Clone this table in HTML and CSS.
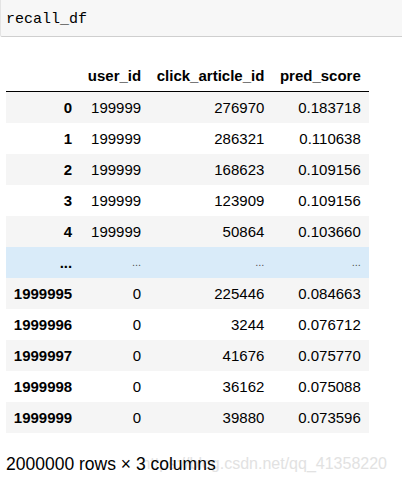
FILE: index.html
```html
<!DOCTYPE html>
<html>
<head>
<meta charset="utf-8">
<link rel="stylesheet" href="styles.css">
</head>
<body>
<div class="input-cell"><span class="code">recall_df</span></div>
<div class="output">
  <table class="df">
    <thead>
      <tr><th></th><th>user_id</th><th>click_article_id</th><th>pred_score</th></tr>
    </thead>
    <tbody>
      <tr><th>0</th><td>199999</td><td>276970</td><td>0.183718</td></tr>
      <tr><th>1</th><td>199999</td><td>286321</td><td>0.110638</td></tr>
      <tr><th>2</th><td>199999</td><td>168623</td><td>0.109156</td></tr>
      <tr><th>3</th><td>199999</td><td>123909</td><td>0.109156</td></tr>
      <tr><th>4</th><td>199999</td><td>50864</td><td>0.103660</td></tr>
      <tr class="hover"><th>...</th><td class="dots">...</td><td class="dots">...</td><td class="dots">...</td></tr>
      <tr><th>1999995</th><td>0</td><td>225446</td><td>0.084663</td></tr>
      <tr><th>1999996</th><td>0</td><td>3244</td><td>0.076712</td></tr>
      <tr><th>1999997</th><td>0</td><td>41676</td><td>0.075770</td></tr>
      <tr><th>1999998</th><td>0</td><td>36162</td><td>0.075088</td></tr>
      <tr><th>1999999</th><td>0</td><td>39880</td><td>0.073596</td></tr>
    </tbody>
  </table>
  <div class="footer">
    <span class="watermark">https://blog.csdn.net/qq_41358220</span>
    <span class="shape">2000000 rows × 3 columns</span>
  </div>
</div>
</body>
</html>
```
FILE: styles.css
```css
html, body {
  margin: 0;
  padding: 0;
  background: #fff;
}
body {
  width: 402px;
  height: 481px;
  overflow: hidden;
  font-family: "Liberation Sans", Arial, sans-serif;
  color: #000;
}
.input-cell {
  height: 36px;
  background: #f7f7f7;
  border-bottom: 1px solid #cfcfcf;
  border-left: 1px solid #e4e4e4;
  border-bottom-left-radius: 2px;
  box-sizing: content-box;
  display: flex;
  align-items: center;
  padding-left: 5px;
}
.code {
  font-family: "Liberation Mono", "Courier New", monospace;
  font-size: 15px;
  position: relative;
  top: 1px;
}
.output {
  padding: 23px 0 0 6px;
}
.df {
  border-collapse: collapse;
  border-spacing: 0;
  font-size: 15px;
}
.df th, .df td {
  padding: 0 7.8px;
  height: 31px;
  line-height: 15px;
  text-align: right;
  vertical-align: middle;
  white-space: nowrap;
}
.df th {
  font-weight: bold;
}
.df thead th {
  border-bottom: 1px solid #000;
  height: 31px;
  box-sizing: border-box;
}
.df tbody tr:nth-child(odd) {
  background: #f5f5f5;
}
.df tbody tr.hover {
  background: #d9ebf9;
}
.df td.dots {
  color: #555;
  font-size: 11px;
}
.footer {
  position: relative;
  margin-top: 21px;
  height: 20px;
  display: flex;
  align-items: center;
}
.watermark {
  position: absolute;
  right: 15px;
  top: 0;
  line-height: 20px;
  font-size: 16px;
  color: #e2e2e2;
  white-space: nowrap;
}
.shape {
  position: relative;
  font-size: 17.5px;
  line-height: 20px;
  white-space: nowrap;
}
```
